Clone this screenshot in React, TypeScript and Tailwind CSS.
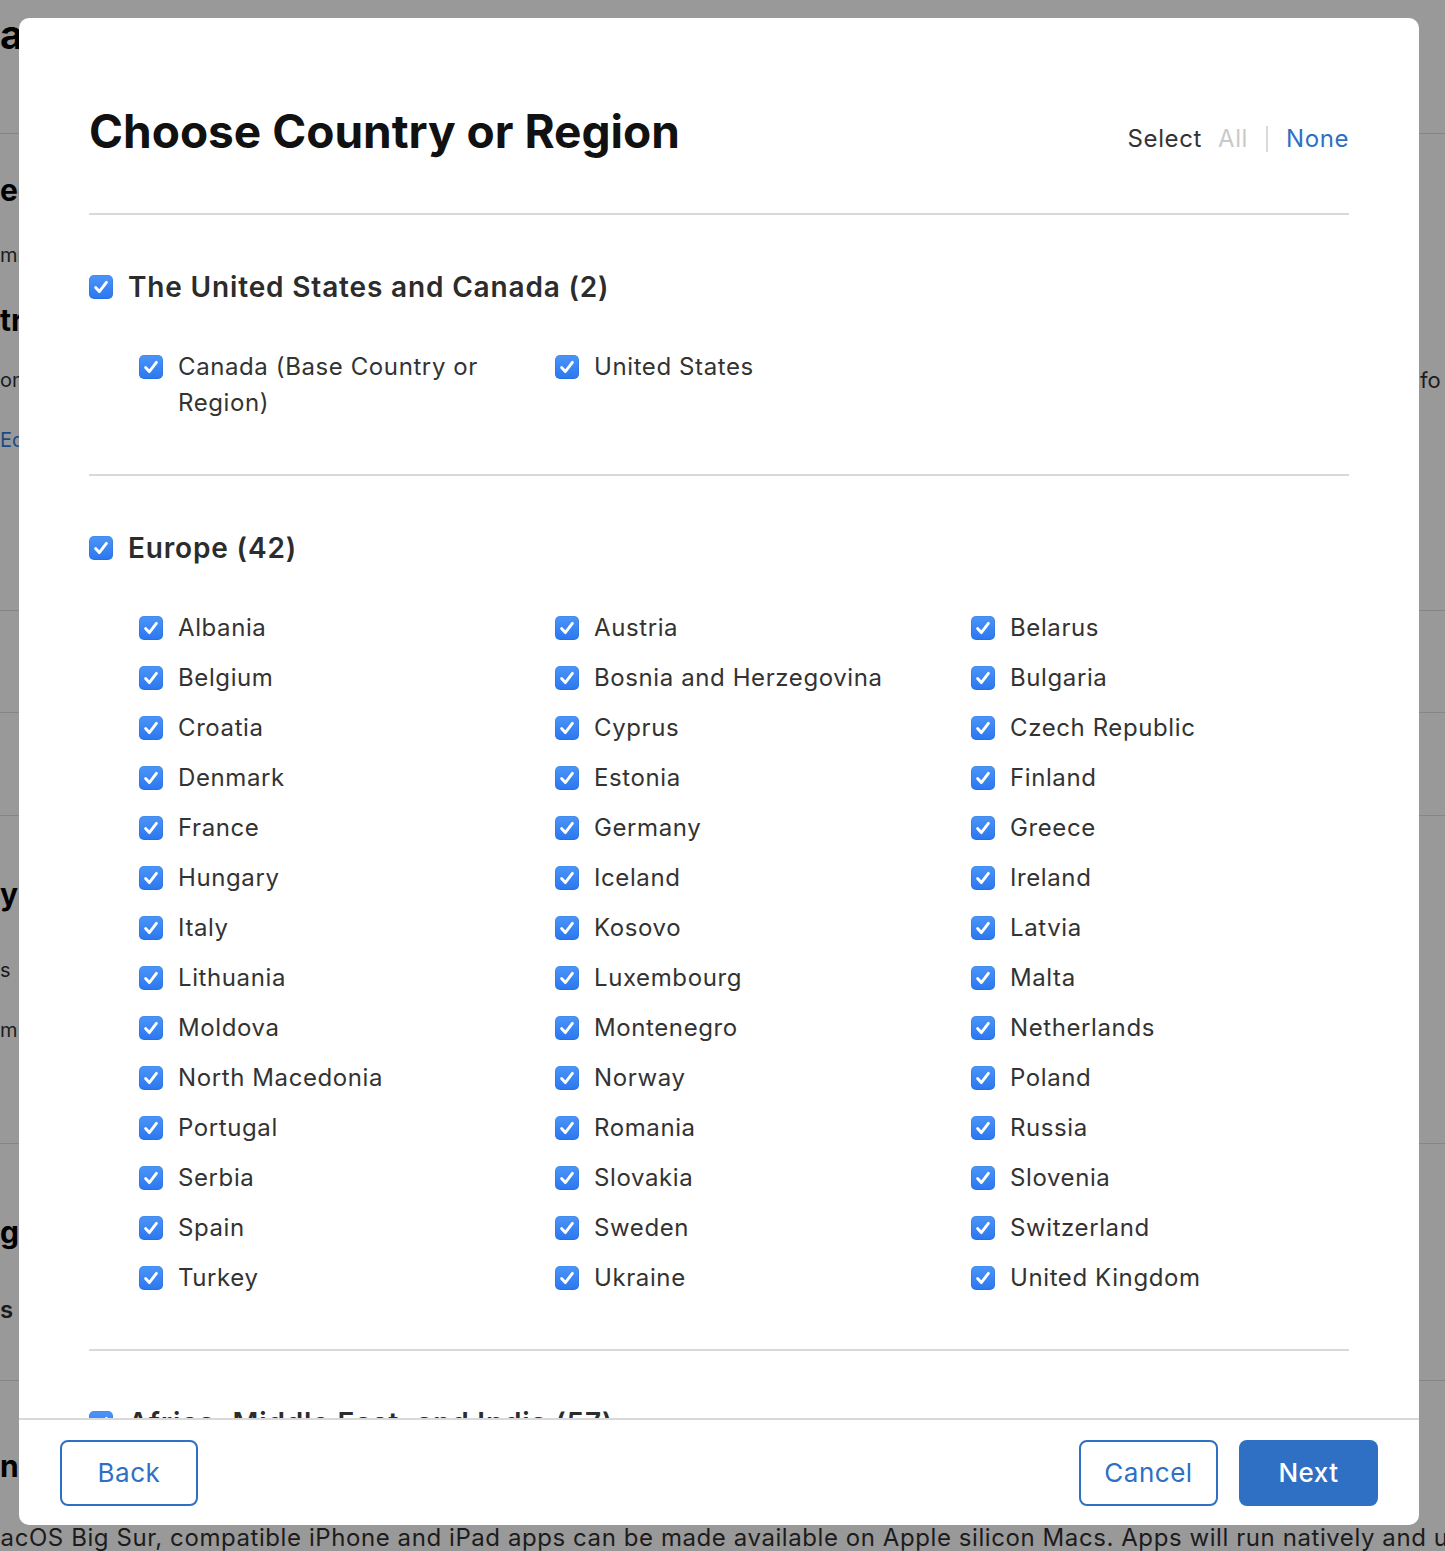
import React from 'react';

const europe = [
  'Albania', 'Austria', 'Belarus',
  'Belgium', 'Bosnia and Herzegovina', 'Bulgaria',
  'Croatia', 'Cyprus', 'Czech Republic',
  'Denmark', 'Estonia', 'Finland',
  'France', 'Germany', 'Greece',
  'Hungary', 'Iceland', 'Ireland',
  'Italy', 'Kosovo', 'Latvia',
  'Lithuania', 'Luxembourg', 'Malta',
  'Moldova', 'Montenegro', 'Netherlands',
  'North Macedonia', 'Norway', 'Poland',
  'Portugal', 'Romania', 'Russia',
  'Serbia', 'Slovakia', 'Slovenia',
  'Spain', 'Sweden', 'Switzerland',
  'Turkey', 'Ukraine', 'United Kingdom',
];

function Check() {
  return (
    <span className="flex h-[24px] w-[24px] shrink-0 items-center justify-center rounded-[5px] bg-gradient-to-b from-[#4b95f9] to-[#2a76ef] shadow-[inset_0_0_0_1px_rgba(0,0,0,0.06)]">
      <svg width="24" height="24" viewBox="0 0 24 24" fill="none">
        <path d="M6.6 12.6 L10.3 16.6 L17.4 7.4" stroke="white" strokeWidth="2.9" strokeLinecap="round" strokeLinejoin="round" />
      </svg>
    </span>
  );
}

function Item({ label }: { label: string }) {
  return (
    <label className="flex items-start gap-[15px] pr-[30px]">
      <span className="mt-[6px]"><Check /></span>
      <span className="text-[24px] leading-[36px] tracking-[0.025em] text-[#333]">{label}</span>
    </label>
  );
}

function Section({ title, items }: { title: string; items: string[] }) {
  return (
    <section className="border-b-2 border-[#d9d9d9] pt-[54px] pb-[53px]">
      <div className="flex items-center gap-[15px]">
        <Check />
        <h2 className="text-[28px] font-semibold leading-[36px] tracking-[0.03em] text-[#2c2c2c]">{title}</h2>
      </div>
      <div className="ml-[50px] mt-[44px] grid grid-cols-[416px_416px_416px] gap-y-[14px]">
        {items.map(c => (
          <Item key={c} label={c} />
        ))}
      </div>
    </section>
  );
}

function Background() {
  return (
    <div className="flex flex-col text-[#1c1c1c]">
      <div className="flex h-[134px] flex-col border-b border-[#858585] pt-[11px]">
        <div className="whitespace-nowrap text-[40px] font-bold leading-[48px] tracking-[-0.04em] text-black">and Availability</div>
      </div>
      <div className="flex h-[477px] flex-col border-b border-[#858585]">
        <div className="mt-[36px] text-[30px] font-bold leading-[40px] text-black">ed Price</div>
        <div className="mt-[30px] text-[20px] leading-[30px]">mm</div>
        <div className="mt-[30px] text-[30px] font-bold leading-[40px] text-black">tr</div>
        <div className="mt-[25px] flex justify-between text-[20px] leading-[30px]">
          <span>om</span>
          <span className="w-[25px] overflow-hidden whitespace-nowrap text-[22px]">fo</span>
        </div>
        <div className="mt-[30px] text-[20px] leading-[30px] text-[#1c4a86]">Ed</div>
      </div>
      <div className="h-[102px] border-b border-[#858585]" />
      <div className="h-[103px] border-b border-[#858585]" />
      <div className="flex h-[328px] flex-col border-b border-[#858585]">
        <div className="mt-[58px] text-[30px] font-bold leading-[40px] text-black">y</div>
        <div className="mt-[41px] text-[20px] leading-[30px]">s</div>
        <div className="mt-[30px] text-[20px] leading-[30px]">m</div>
      </div>
      <div className="flex h-[237px] flex-col border-b border-[#858585]">
        <div className="mt-[68px] text-[30px] font-bold leading-[40px] text-black">gc</div>
        <div className="mt-[43px] text-[24px] font-semibold leading-[30px]">s</div>
      </div>
      <div className="flex flex-col">
        <div className="mt-[65px] text-[30px] font-bold leading-[40px] text-black">nc</div>
        <div className="ml-[-21px] mt-[37px] whitespace-nowrap text-[24px] leading-[30px] tracking-[0.024em]">
          macOS Big Sur, compatible iPhone and iPad apps can be made available on Apple silicon Macs. Apps will run natively and u
        </div>
      </div>
    </div>
  );
}

export default function App() {
  return (
    <div className="relative h-[1551px] w-full overflow-hidden bg-[#999999] font-['Inter','Liberation_Sans',sans-serif]">
      <Background />

      <div className="absolute left-[19px] top-[18px] flex h-[1507px] w-[1400px] flex-col overflow-hidden rounded-[10px] bg-white">
        <div className="flex-1 overflow-hidden px-[70px]">
          <div className="flex items-start justify-between border-b-2 border-[#d9d9d9] pt-[85px] pb-[54px]">
            <h1 className="text-[46px] font-bold leading-[56px] text-[#111]">Choose Country or Region</h1>
            <div className="mt-[20px] flex items-center text-[24px] leading-[32px] tracking-[0.025em]">
              <span className="text-[#333]">Select</span>
              <span className="ml-[16px] text-[#c9c9c9]">All</span>
              <span className="mx-[18px] h-[26px] w-[2px] bg-[#dadada]" />
              <span className="text-[#2f6fc4]">None</span>
            </div>
          </div>

          <Section title="The United States and Canada (2)" items={['Canada (Base Country or Region)', 'United States']} />
          <Section title="Europe (42)" items={europe} />
          <Section title="Africa, Middle East, and India (57)" items={['Algeria', 'Angola', 'Armenia']} />
        </div>

        <div className="flex h-[107px] shrink-0 items-center justify-between border-t-2 border-[#d9d9d9] px-[41px]">
          <button className="h-[66px] w-[138px] rounded-[8px] border-2 border-[#2f6fc4] text-[26px] tracking-[0.02em] text-[#2f6fc4]">Back</button>
          <div className="flex gap-[21px]">
            <button className="h-[66px] w-[139px] rounded-[8px] border-2 border-[#2f6fc4] text-[26px] tracking-[0.02em] text-[#2f6fc4]">Cancel</button>
            <button className="h-[66px] w-[139px] rounded-[8px] bg-[#2f6fc4] text-[26px] font-medium tracking-[0.02em] text-white">Next</button>
          </div>
        </div>
      </div>
    </div>
  );
}
